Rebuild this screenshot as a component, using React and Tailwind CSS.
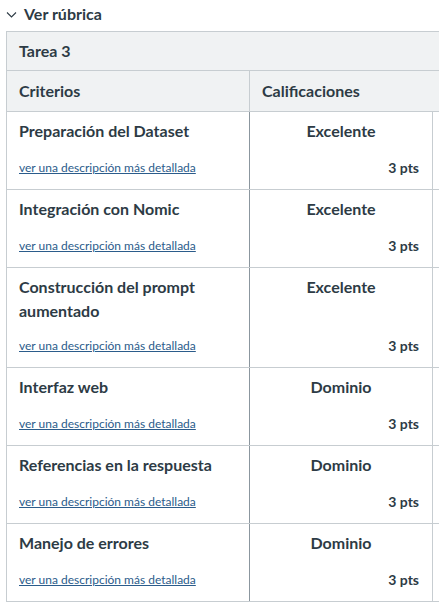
import React from "react";

const rows = [
  { title: "Preparación del Dataset", rating: "Excelente" },
  { title: "Integración con Nomic", rating: "Excelente" },
  { title: "Construcción del prompt aumentado", rating: "Excelente" },
  { title: "Interfaz web", rating: "Dominio" },
  { title: "Referencias en la respuesta", rating: "Dominio" },
  { title: "Manejo de errores", rating: "Dominio" },
];

export default function App() {
  return (
    <div className="w-[439px] h-[606px] overflow-hidden bg-white font-['Lato',sans-serif] text-[#2d3b45]">
      <div className="h-[31px] flex items-center pb-[3px] pl-[6px] gap-[7px]">
        <svg width="11" height="11" viewBox="0 0 11 11" fill="none">
          <polyline points="1,3.5 5.5,8 10,3.5" stroke="#2d3b45" strokeWidth="1.1" />
        </svg>
        <span className="text-[16px] font-bold leading-none">Ver rúbrica</span>
      </div>
      <div className="ml-[6px] w-[500px] border border-[#c7cdd1] border-b-0">
        <div className="h-[39px] bg-[#f0f2f3] border-b border-[#c7cdd1] flex items-center pl-[12px] text-[16px] font-bold">
          Tarea 3
        </div>
        <div className="h-[41px] bg-[#f0f2f3] border-b border-[#c7cdd1] flex text-[16px] font-bold">
          <div className="w-[242px] flex items-center pl-[12px]">Criterios</div>
          <div className="w-[183px] border-l border-[#c7cdd1] flex items-center pl-[12px]">Calificaciones</div>
          <div className="flex-1" />
        </div>
        {rows.map((r, i) => (
          <div key={i} className="flex min-h-[78px] border-b border-[#c7cdd1]">
            <div className="w-[242px] pl-[12px] pr-[12px] pt-[7px] pb-[13px] flex flex-col">
              <div className="text-[16px] font-bold leading-[24px]">{r.title}</div>
              <div className="flex-1" />
              <a href="#" className="mt-[15px] text-[12px] leading-[16px] text-[#2b5c8b] underline">
                ver una descripción más detallada
              </a>
            </div>
            <div className="w-[184px] border-l border-r border-l-[#8b969e] border-r-[#c7cdd1] pt-[7px] pb-[13px] flex flex-col">
              <div className="text-[16px] font-bold leading-[24px] text-center">{r.rating}</div>
              <div className="flex-1" />
              <div className="text-[14px] font-bold leading-[16px] text-right pr-[13px]">3 pts</div>
            </div>
            <div className="flex-1" />
          </div>
        ))}
      </div>
    </div>
  );
}
